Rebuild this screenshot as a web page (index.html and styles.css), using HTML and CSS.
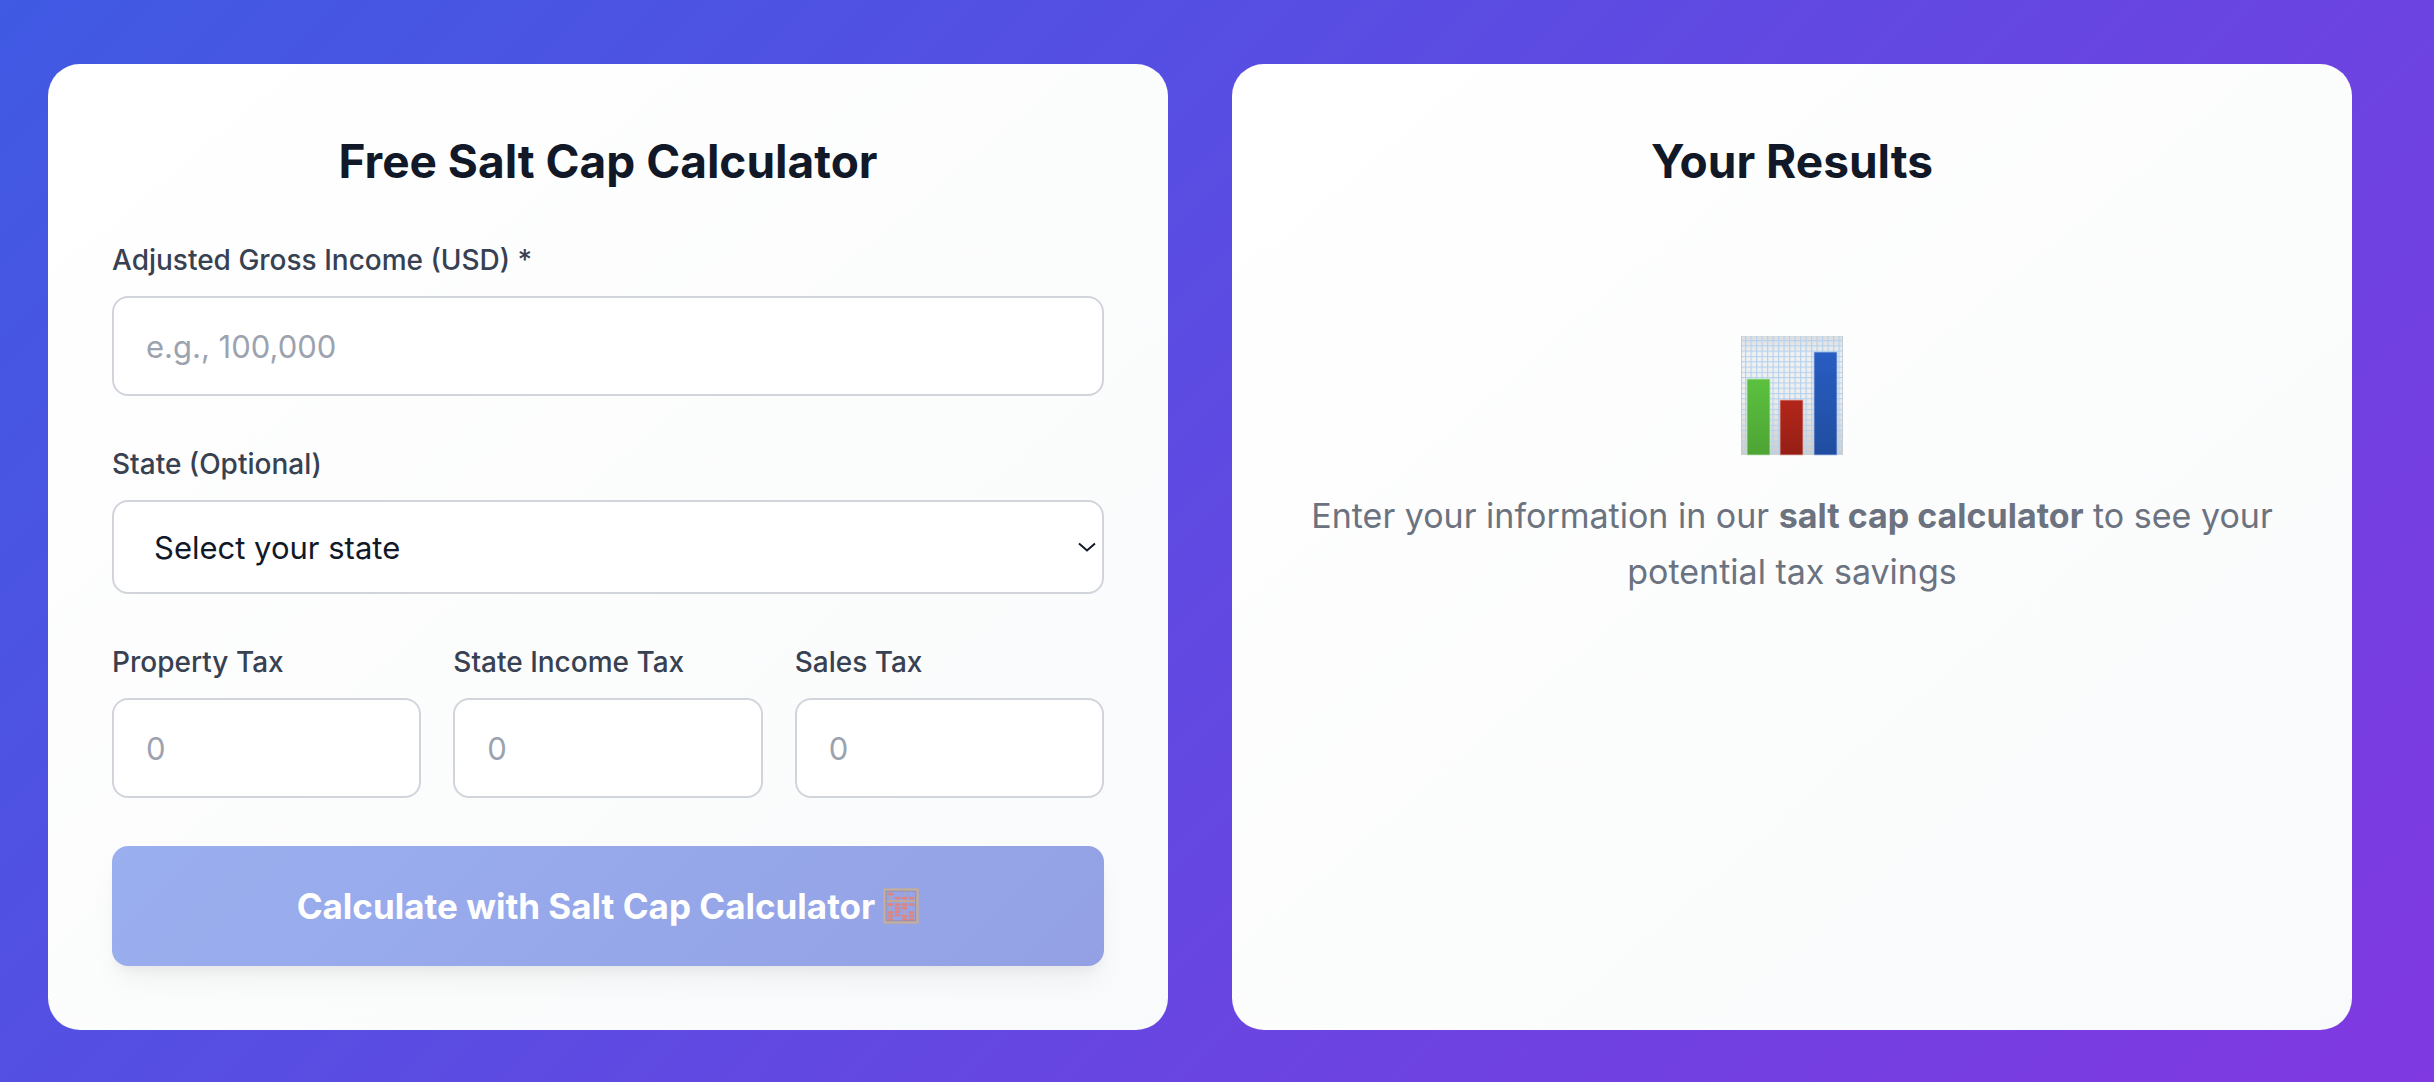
FILE: index.html
```html
<!DOCTYPE html>
<html lang="en">
<head>
  <meta charset="UTF-8" />
  <meta name="viewport" content="width=device-width, initial-scale=1.0"/>
  <title>Free Salt Cap Calculator</title>
  <link rel="stylesheet" href="styles.css">
</head>
<body>

  <main class="calculator">
    <section class="card">
      <h2>Free Salt Cap Calculator</h2>

      <form class="form">
        <div class="field">
          <label for="income">Adjusted Gross Income (USD) *</label>
          <input id="income" type="text" inputmode="numeric" placeholder="e.g., 100,000" />
        </div>

        <div class="field">
          <label for="state">State (Optional)</label>
          <div class="select-wrap">
            <select id="state">
              <option value="">Select your state</option>
              <option value="CA">California</option>
              <option value="NJ">New Jersey</option>
              <option value="NY">New York</option>
            </select>
            <svg class="chevron" viewBox="0 0 18 10" aria-hidden="true">
              <path d="M1 1.5 9 8.5 17 1.5" />
            </svg>
          </div>
        </div>

        <div class="taxes">
          <div class="field">
            <label for="property_tax">Property Tax</label>
            <input id="property_tax" type="text" inputmode="numeric" placeholder="0" />
          </div>
          <div class="field">
            <label for="income_tax">State Income Tax</label>
            <input id="income_tax" type="text" inputmode="numeric" placeholder="0" />
          </div>
          <div class="field">
            <label for="sales_tax">Sales Tax</label>
            <input id="sales_tax" type="text" inputmode="numeric" placeholder="0" />
          </div>
        </div>

        <button type="submit" disabled>
          <span>Calculate with Salt Cap Calculator</span>
          <svg class="abacus" viewBox="0 0 36 36" aria-hidden="true">
            <path d="M7.5 3v30M14.5 3v30M21.5 3v30M28.5 3v30" stroke="#b3a5b4" />
            <g fill="#dc8583">
              <ellipse cx="7.5" cy="6" rx="3" ry="1.6" />
              <ellipse cx="14.5" cy="10" rx="3" ry="1.6" />
              <ellipse cx="21.5" cy="10" rx="3" ry="1.6" />
              <ellipse cx="28.5" cy="10" rx="3" ry="1.6" />

              <ellipse cx="7.5" cy="16.5" rx="3" ry="1.6" />
              <ellipse cx="7.5" cy="24.5" rx="3" ry="1.6" />
              <ellipse cx="7.5" cy="28" rx="3" ry="1.6" />
              <ellipse cx="7.5" cy="31.5" rx="3" ry="1.6" />

              <ellipse cx="14.5" cy="16.5" rx="3" ry="1.6" />
              <ellipse cx="14.5" cy="20" rx="3" ry="1.6" />
              <ellipse cx="14.5" cy="23.5" rx="3" ry="1.6" />
              <ellipse cx="14.5" cy="27" rx="3" ry="1.6" />

              <ellipse cx="21.5" cy="16.5" rx="3" ry="1.6" />
              <ellipse cx="21.5" cy="20" rx="3" ry="1.6" />
              <ellipse cx="21.5" cy="28" rx="3" ry="1.6" />
              <ellipse cx="21.5" cy="31.5" rx="3" ry="1.6" />

              <ellipse cx="28.5" cy="16.5" rx="3" ry="1.6" />
              <ellipse cx="28.5" cy="24.5" rx="3" ry="1.6" />
              <ellipse cx="28.5" cy="28" rx="3" ry="1.6" />
              <ellipse cx="28.5" cy="31.5" rx="3" ry="1.6" />
            </g>
            <path d="M2 13h32" stroke="#c0a998" stroke-width="2" />
            <rect x="3" y="3" width="30" height="30" fill="none" stroke="#908a9c" stroke-width="1" />
            <rect x="1.5" y="1.5" width="33" height="33" fill="none" stroke="#c4ad9b" stroke-width="2.4" />
          </svg>
        </button>
      </form>
    </section>

    <section class="card">
      <h2>Your Results</h2>

      <div class="empty">
        <svg class="chart" viewBox="0 0 102 120" aria-hidden="true">
          <defs>
            <pattern id="grid" x="4" y="4" width="5.5" height="5.3" patternUnits="userSpaceOnUse">
              <path d="M0 0.6H5.5M0.6 0V5.3" stroke="#b5d2ee" stroke-width="1.2" />
            </pattern>
            <linearGradient id="paper" x1="0" y1="0" x2="0" y2="1">
              <stop offset="0" stop-color="#dcdcdc" />
              <stop offset="0.15" stop-color="#f1f1f1" />
              <stop offset="0.5" stop-color="#efefef" />
              <stop offset="1" stop-color="#cfcdcb" />
            </linearGradient>
            <linearGradient id="green" x1="0" y1="0" x2="0" y2="1">
              <stop offset="0" stop-color="#5bc13f" />
              <stop offset="1" stop-color="#4da434" />
            </linearGradient>
            <linearGradient id="red" x1="0" y1="0" x2="0" y2="1">
              <stop offset="0" stop-color="#b3261a" />
              <stop offset="1" stop-color="#951f15" />
            </linearGradient>
            <linearGradient id="blue" x1="0" y1="0" x2="0" y2="1">
              <stop offset="0" stop-color="#285dc2" />
              <stop offset="1" stop-color="#204d9f" />
            </linearGradient>
          </defs>
          <rect width="102" height="119" fill="url(#paper)" />
          <rect width="102" height="119" fill="url(#grid)" />
          <path d="M0.5 0V119M101.5 0V119" stroke="#c3cdd6" />
          <rect x="6" y="43" width="23" height="76" fill="url(#green)" stroke="#bfe3bb" stroke-width="0.8" />
          <rect x="39" y="64" width="23" height="55" fill="url(#red)" stroke="#e0b0b0" stroke-width="0.8" />
          <rect x="73" y="16" width="23" height="103" fill="url(#blue)" stroke="#a9bfe6" stroke-width="0.8" />
        </svg>
        <p>Enter your information in our <strong>salt cap calculator</strong> to see your potential tax savings</p>
      </div>
    </section>
  </main>

</body>
</html>
```
FILE: styles.css
```css
* {
  box-sizing: border-box;
}
body {
  margin: 0;
  min-height: 100vh;
  background: linear-gradient(135deg, #405ae4, #8039e0);
  color: #111827;
  font-family: Inter, "Liberation Sans", sans-serif;
}
.calculator {
  display: grid;
  grid-template-columns: 1fr 1fr;
  gap: 64px;
  padding: 64px 82px 52px 48px;
}
.card {
  padding: 64px;
  border-radius: 32px;
  background: linear-gradient(to bottom right, #ffffff, #f9fafb);
}
h2 {
  margin: 0 0 46px;
  font-size: 46px;
  line-height: 66px;
  font-weight: 700;
  text-align: center;
}
.form {
  display: grid;
  gap: 48px;
}
.field {
  display: grid;
  gap: 16px;
  min-width: 0;
}
.taxes {
  display: grid;
  grid-template-columns: repeat(3, 1fr);
  gap: 32px;
}
label {
  color: #374151;
  font-size: 28px;
  line-height: 40px;
  font-weight: 500;
}
input, select {
  width: 100%;
  font-family: inherit;
  font-size: 31px;
  color: #111827;
  background: #fff;
  border: 2px solid #d1d5db;
  border-radius: 16px;
}
input {
  height: 100px;
  padding: 0 32px;
}
input::placeholder {
  color: #9ca3af;
  opacity: 1;
}
select {
  display: block;
  height: 94px;
  padding: 0 40px;
  appearance: none;
}
.select-wrap {
  position: relative;
}
.chevron {
  position: absolute;
  right: 8px;
  top: 42px;
  width: 18px;
  height: 10px;
  fill: none;
  stroke: #111827;
  stroke-width: 2;
  pointer-events: none;
}
button {
  display: flex;
  align-items: center;
  justify-content: center;
  gap: 8px;
  width: 100%;
  height: 120px;
  border: 0;
  border-radius: 16px;
  background: linear-gradient(135deg, #9aafef, #93a1e4);
  box-shadow: 0 20px 30px -6px rgba(0, 0, 0, 0.05), 0 8px 12px -4px rgba(0, 0, 0, 0.05);
  color: #fff;
  font-family: inherit;
  font-size: 35px;
  line-height: 56px;
  font-weight: 700;
}
.abacus {
  width: 36px;
  height: 36px;
}
.empty {
  padding: 96px 0;
  text-align: center;
}
.chart {
  display: block;
  width: 102px;
  height: 120px;
  margin: 0 auto 32px;
}
.empty p {
  margin: 0;
  color: #6b7280;
  font-size: 34px;
  line-height: 56px;
}

@media (max-width: 1400px) {
  .calculator {
    grid-template-columns: 1fr;
  }
}
```
